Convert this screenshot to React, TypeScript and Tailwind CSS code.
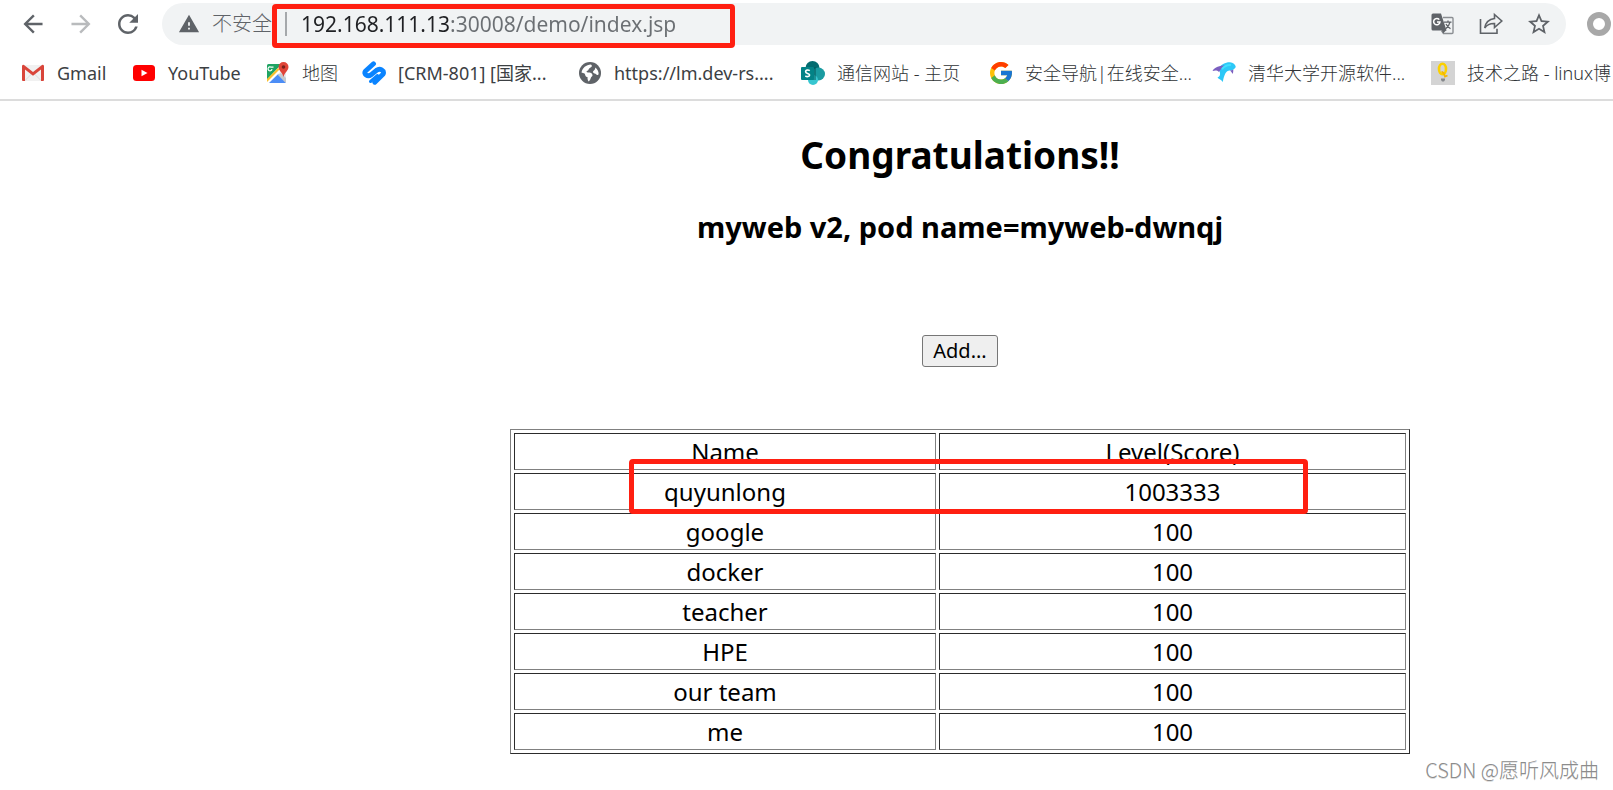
import type { ReactNode } from "react";
import { MdArrowBack, MdArrowForward, MdRefresh, MdStarBorder, MdWarning } from "react-icons/md";
import { FcGoogle } from "react-icons/fc";

const GmailIcon = () => (
  <svg viewBox="0 0 24 24" className="size-6">
    <path d="M2 4h20v16H2z" fill="#f1f1f1" />
    <path d="M4 19.500 11 12.500h2l7 7" fill="none" stroke="#dcdcdc" />
    <path d="M1 5a1.500 1.500 0 0 1 2-1l9 7 9-7a1.500 1.500 0 0 1 2 1v14a1 1 0 0 1-1 1h-2V8.500l-8 6.200-8-6.200V20H2a1 1 0 0 1-1-1z" fill="#d9453a" />
  </svg>
);

const YouTubeIcon = () => (
  <svg viewBox="0 0 24 24" className="size-6">
    <rect x="1" y="4" width="22" height="16" rx="3.500" fill="#f00" />
    <path d="m9.500 8.800 6 3.200-6 3.200z" fill="#fff" />
  </svg>
);

const MapIcon = () => (
  <svg viewBox="0 0 24 24" className="size-6">
    <rect x="1" y="3" width="19" height="19" rx="1.500" fill="#e8eaed" />
    <path d="M1 4.500A1.500 1.500 0 0 1 2.500 3H16L1 19z" fill="#1fa463" />
    <path d="M2 22 12 13l8 9z" fill="#4c8df6" />
    <path d="M1 18.500 14 5l3 3L3 22H1z" fill="#fff" />
    <path d="M1 18 12 7l1.500 1.500L1 21z" fill="#fbc02d" />
    <path d="m12 14 8 8v-5l-5-5z" fill="#c6c9cc" />
    <path d="M7.500 7.200H5.200a2 2 0 1 0 .8 2" transform="translate(0 -1)" fill="none" stroke="#fff" strokeWidth="1.200" />
    <path d="M17.500 1a5 5 0 0 1 5 5c0 3.500-4 5.500-5 10-1-4.500-5-6.500-5-10a5 5 0 0 1 5-5z" fill="#e04437" />
    <circle cx="17.500" cy="6" r="1.800" fill="#7a211b" />
  </svg>
);

const CrmIcon = () => (
  <svg viewBox="0 0 24 24" className="size-6" fill="none" stroke="#0a84ff" strokeWidth="4.900" strokeLinecap="round" strokeLinejoin="round">
    <path d="M11.500 2.800 3.300 10.300C1.500 13 5.500 16.500 9 13.800L14.500 9.300C18 6.800 22.500 9.500 21.200 13L12.800 21.200" />
    <path d="M8.500 20.500 15.500 14.500" strokeWidth="3" />
  </svg>
);

const GlobeIcon = () => (
  <svg viewBox="0 0 24 24" className="size-6">
    <circle cx="12" cy="12" r="11" fill="#5f6368" />
    <path d="M3.500 11.500C4.500 7 8 3.800 13 3.600c1.600 1.200 1 2.600-.8 3.200-1.900.7-1.200 2.400-2.800 3-1.500.5-1 1.700.6 1.700 2.500 0 4.200.6 4.500 2.500.2 1.500-1.500 1.700-1.800 3.300-.3 1.500-1 2.200-2 3.200C9.500 19 9.500 17.500 9.500 16 7 16 7.500 13.500 6.500 12.500z" fill="#fff" />
    <path d="M17 6.500c2.500 1.500 3.800 4 3.600 6.500-.2 1-1.500 1.500-2.300.6-.8-1.300-2.800-.9-3.300-2.300-.4-1.600 2.800-2 2-4.800z" fill="#fff" />
  </svg>
);

const SharePointIcon = () => (
  <svg viewBox="0 0 24 24" className="size-6">
    <circle cx="11.500" cy="7" r="7" fill="#036c70" />
    <circle cx="17.500" cy="13" r="6.500" fill="#1a9ba1" />
    <circle cx="12" cy="19" r="5" fill="#37c6d0" />
    <path d="M6 6h9v13H6z" fill="#025558" opacity=".5" />
    <rect x="0" y="6" width="13" height="13" rx="1" fill="#038387" />
    <path d="M8.800 9.600C7 8.600 4.600 9 4.600 10.700c0 2 4 1.500 4 3.400 0 1.700-2.600 1.900-4.300.9" fill="none" stroke="#fff" strokeWidth="1.600" />
  </svg>
);

const FishIcon = () => (
  <svg viewBox="0 0 24 24" className="size-6">
    <path d="M5 9C9 3 14 1 18 1.200c3 .2 5.500 2 5.800 4.800-1 2-3 3.300-6 3.500-4 .3-5.500 4-7 11.500-1.500-2.500-3.800-2.500-5.300-4.500 2.500-1 3.500-3.500 1.500-7.500z" fill="#2cc8f7" />
    <path d="M.5 10C2.500 6 8 4.500 13 4.500 10 6 8.500 8.500 7 11 5 9 3 9.300.5 10z" fill="#7b5fc0" />
    <path d="M18 9.500c2-.2 3.200-.8 3.200-.8s.5 2-.7 4.300c-.5-1.500-1.500-2.500-2.500-3.500z" fill="#7b5fc0" />
    <path d="M10 8c3-3.500 6-4.500 9-4" fill="none" stroke="#3ee0ff" strokeWidth="2" />
  </svg>
);

const BulbIcon = () => (
  <svg viewBox="0 0 24 24" className="size-6">
    <path d="M0 0h24v24H0z" fill="#d4d4d4" />
    <ellipse cx="11.500" cy="8" rx="3.500" ry="5.200" fill="none" stroke="#fbd000" strokeWidth="2.600" />
    <path d="M10.500 11c1.500 0 2.500 1 3.500 4.500l2.500-1" fill="none" stroke="#f5b800" strokeWidth="1.800" />
    <path d="M10 17.500h4v1.500l-1 1.500h-2l-1-1.500z" fill="#85888c" />
  </svg>
);

const TranslateIcon = () => (
  <svg viewBox="0 0 24 24" className="size-6">
    <path d="M12 5.500h9a1 1 0 0 1 1 1v14a1 1 0 0 1-1 1h-8.500l-2-3" fill="none" stroke="#8b8e92" strokeWidth="1.400" />
    <path d="M2 1.500h8l5.500 17H2A1.500 1.500 0 0 1 .5 17V3A1.500 1.500 0 0 1 2 1.500z" fill="#5f6368" />
    <path d="M11 18h4.500L12 21.500z" fill="#5f6368" />
    <path d="M8.300 7.600A3.200 3.200 0 1 0 9 10H6" fill="none" stroke="#fff" strokeWidth="1.500" />
    <path d="M13 10.200h7.500M17 8.500v1.700m2 0c-.6 3-2.500 5.200-4.500 6.800m.5-5c1 2 2.500 3.500 4.500 4.800" fill="none" stroke="#5f6368" strokeWidth="1.300" />
  </svg>
);

const ShareIcon = () => (
  <svg viewBox="0 0 24 24" className="size-6" fill="none" stroke="#5f6368" strokeWidth="1.600">
    <path d="M1.500 7v14.200h16.500v-4.500" />
    <path d="M15.500 2.500 22.800 9l-7.300 6.500v-4c-4.500-.2-7.500 1.300-9.800 4.500.8-5 3.800-8.800 9.800-9.500z" />
  </svg>
);

const latin = "font-normal text-[#3c4043]";
const chinese = "font-light text-[#303336]";

const bookmarks: { label: string; icon: ReactNode; width: string; tone: string }[] = [
  { label: "Gmail", icon: <GmailIcon />, width: "w-[111px]", tone: latin },
  { label: "YouTube", icon: <YouTubeIcon />, width: "w-[134px]", tone: latin },
  { label: "地图", icon: <MapIcon />, width: "w-24", tone: chinese },
  { label: "[CRM-801] [国家...", icon: <CrmIcon />, width: "w-[216px]", tone: latin },
  { label: "https://lm.dev-rs....", icon: <GlobeIcon />, width: "w-[223px]", tone: latin },
  { label: "通信网站 - 主页", icon: <SharePointIcon />, width: "w-[188px]", tone: chinese },
  { label: "安全导航|在线安全...", icon: <FcGoogle className="size-6 scale-110" />, width: "w-[223px]", tone: chinese },
  { label: "清华大学开源软件...", icon: <FishIcon />, width: "w-[219px]", tone: chinese },
  { label: "技术之路 - linux博", icon: <BulbIcon />, width: "w-[223px]", tone: chinese },
];

const rows = [
  ["quyunlong", "1003333"],
  ["google", "100"],
  ["docker", "100"],
  ["teacher", "100"],
  ["HPE", "100"],
  ["our team", "100"],
  ["me", "100"],
];

const cell = "h-[37px] border border-t-[#2c2c2c] border-r-[#808080] border-b-[#808080] border-l-[#2c2c2c] p-0 text-center font-normal";

function Toolbar() {
  return (
    <div className="flex h-12 items-center pl-5 text-[#5f6368]">
      <button aria-label="Back" className="mr-[22px] shrink-0"><MdArrowBack className="size-[26px] scale-110" /></button>
      <button aria-label="Forward" className="mr-[22px] shrink-0 text-[#b9bbbd]"><MdArrowForward className="size-[26px] scale-110" /></button>
      <button aria-label="Reload" className="mr-[22px] shrink-0"><MdRefresh className="size-6 scale-125" /></button>
      <div className="relative flex h-[42px] min-w-0 flex-1 items-center rounded-full bg-[#f1f3f4] pr-[15px] pl-4">
        <button className="flex shrink-0 items-center gap-3">
          <MdWarning className="size-[22px]" />
          <span className="text-xl font-light">不安全</span>
        </button>
        <span className="mr-3.5 ml-[13px] h-6 w-0.5 shrink-0 bg-[#a5a8ab]" />
        <input
          aria-label="Address"
          defaultValue="192.168.111.13:30008/demo/index.jsp"
          className="min-w-0 flex-1 bg-[linear-gradient(90deg,#202124_150px,#6b6f73_150px)] bg-clip-text pt-0.5 text-[21px] text-transparent outline-none"
        />
        <div className="flex shrink-0 items-center gap-6">
          <button aria-label="Translate"><TranslateIcon /></button>
          <button aria-label="Share"><ShareIcon /></button>
          <button aria-label="Bookmark"><MdStarBorder className="size-6 scale-110" /></button>
        </div>
        <div className="pointer-events-none absolute top-px left-[110px] h-11 w-[463px] rounded border-[5px] border-[#ff1f11]" />
      </div>
      <button aria-label="Profile" className="mr-0.5 ml-[21px] size-6 shrink-0 rounded-full border-[6px] border-[#a8a8a8]" />
    </div>
  );
}

export default function App() {
  return (
    <div className="relative min-h-screen overflow-hidden bg-white font-['Noto_Sans','Noto_Sans_CJK_SC',sans-serif] text-black">
      <header className="border-b-2 border-[#dcdcdc]">
        <Toolbar />
        <nav className="flex h-[51px] items-center overflow-hidden pb-0.5 pl-[21px]">
          {bookmarks.map((b) => (
            <a key={b.label} href="#" className={`flex shrink-0 items-center gap-3 text-lg whitespace-nowrap ${b.tone} ${b.width}`}>
              <span className="shrink-0">{b.icon}</span>
              {b.label}
            </a>
          ))}
        </nav>
      </header>
      <main className="flex flex-col items-center pl-[307px]">
        <h1 className="mt-7 text-[37px] leading-[52px] font-bold">Congratulations!!</h1>
        <h2 className="mt-[26px] text-[29px] leading-10 font-bold">myweb v2, pod name=myweb-dwnqj</h2>
        <button className="mt-[88px] h-8 rounded-[3px] border border-[#767676] bg-[#efefef] px-2.5 text-xl leading-7">Add...</button>
        <div className="relative mt-[62px] w-[900px]">
          <table className="w-full table-fixed border-separate border-spacing-[3px] border border-t-[#808080] border-r-[#2c2c2c] border-b-[#2c2c2c] border-l-[#808080] text-2xl leading-[35px]">
            <colgroup>
              <col className="w-[422px]" />
              <col />
            </colgroup>
            <thead>
              <tr>
                <th className={cell}>Name</th>
                <th className={cell}>Level(Score)</th>
              </tr>
            </thead>
            <tbody>
              {rows.map(([name, score]) => (
                <tr key={name}>
                  <td className={cell}>{name}</td>
                  <td className={cell}>{score}</td>
                </tr>
              ))}
            </tbody>
          </table>
          <div className="pointer-events-none absolute top-[30px] left-[119px] h-[55px] w-[679px] rounded border-[5px] border-[#ff1f11]" />
        </div>
      </main>
      <div className="absolute right-3.5 bottom-1.5 font-['Noto_Sans_CJK_SC',sans-serif] text-xl leading-7 font-light text-[#8c8c8c] text-shadow-2xs">CSDN @愿听风成曲</div>
    </div>
  );
}
